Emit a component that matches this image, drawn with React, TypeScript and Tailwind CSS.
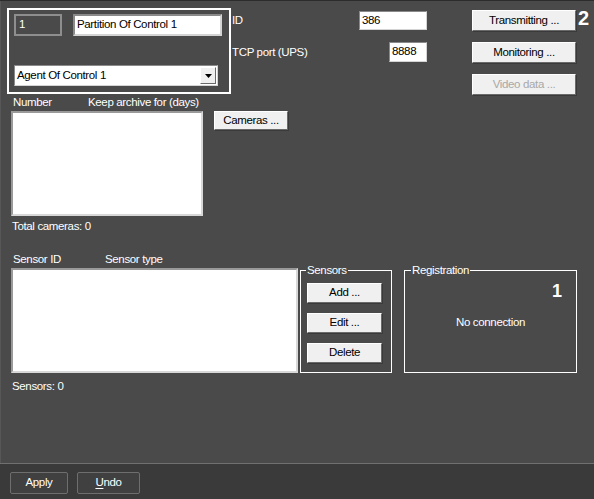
import React from "react";

const FONT = { fontFamily: '"Liberation Sans", Arial, sans-serif' };

function Btn({ w, h, children, disabled }: { w: string; h: string; children: React.ReactNode; disabled?: boolean }) {
  return (
    <div
      className={`${w} ${h} flex items-center justify-center bg-[#f0f0f0] border border-t-white border-l-white border-r-[#6a6a6a] border-b-[#6a6a6a] shadow-[1px_1px_0_#3a3a3a] leading-none ${
        disabled ? "text-[#a8a8a8]" : "text-black"
      }`}
    >
      {children}
    </div>
  );
}

function Input({ w, h, children }: { w: string; h: string; children?: React.ReactNode }) {
  return (
    <div
      className={`${w} ${h} flex items-center bg-white border border-t-[#8a8a8a] border-l-[#8a8a8a] border-r-[#d4d4d4] border-b-[#d4d4d4] pl-[2px] leading-none text-black`}
    >
      {children}
    </div>
  );
}

export default function App() {
  return (
    <div
      style={FONT}
      className="w-[594px] h-[499px] bg-[#4a4a4a] flex flex-col border-t border-[#2c2c2c] text-white text-[11.5px] tracking-[-0.35px] overflow-hidden"
    >
      <div className="flex-1 flex flex-col border-l border-[#575757]">
        {/* Section A */}
        <div className="flex items-start">
          <div className="ml-[6px] mt-[7px] w-[224px] h-[86px] border-2 border-white pl-[5px] pt-[4px] flex flex-col">
            <div className="flex">
              <div className="w-[48px] h-[22px] border-2 border-[#8e8e8e] flex items-center pl-[3px] leading-none text-white">
                1
              </div>
              <div className="ml-[11px] w-[149px] h-[22px] flex items-center bg-white border-2 border-t-[#8a8a8a] border-l-[#8a8a8a] border-r-[#d4d4d4] border-b-[#d4d4d4] pl-[2px] leading-none text-black">
                Partition Of Control 1
              </div>
            </div>
            <div className="mt-[29px] w-[204px] h-[21px] flex items-center bg-white border border-t-[#8a8a8a] border-l-[#8a8a8a] border-r-[#d4d4d4] border-b-[#d4d4d4] leading-none text-black">
              <span className="flex-1 pl-[2px]">Agent Of Control 1</span>
              <div className="w-[16px] h-[17px] mr-[1px] bg-[#f0f0f0] border border-t-white border-l-white border-r-[#6a6a6a] border-b-[#6a6a6a] flex items-center justify-center">
                <svg width="7" height="4" viewBox="0 0 7 4">
                  <path d="M0 0h7L3.5 4z" fill="#000" />
                </svg>
              </div>
            </div>
          </div>

          <div className="ml-[1px] w-[195px] flex flex-col">
            <div className="mt-[10px] h-[19px] flex items-center justify-between leading-none">
              <span className="mt-[1px]">ID</span>
              <Input w="w-[68px]" h="h-[19px]">386</Input>
            </div>
            <div className="mt-[12px] h-[20px] flex items-center justify-between leading-none">
              <span className="mt-[2px]">TCP port (UPS)</span>
              <Input w="w-[38px]" h="h-[20px]">8888</Input>
            </div>
          </div>

          <div className="ml-[45px] mt-[9px] flex flex-col gap-[11px]">
            <Btn w="w-[104px]" h="h-[21px]">Transmitting ...</Btn>
            <Btn w="w-[104px]" h="h-[21px]">Monitoring ...</Btn>
            <Btn w="w-[104px]" h="h-[21px]" disabled>
              Video data ...
            </Btn>
          </div>
          <div className="ml-[2px] mt-[7px] text-[20px] tracking-normal font-bold leading-none">2</div>
        </div>

        {/* Section B */}
        <div className="flex ml-[10px] mt-[1px]">
          <div className="w-[192px] flex flex-col">
            <div className="h-[14px] flex items-center pl-[2px] leading-none whitespace-nowrap">
              <span className="w-[75px]">Number</span>
              <span>Keep archive for (days)</span>
            </div>
            <div className="mt-[1px] w-[192px] h-[105px] bg-white border-2 border-t-[#9a9a9a] border-l-[#9a9a9a] border-r-[#d8d8d8] border-b-[#d8d8d8]" />
          </div>
          <div className="ml-[11px] mt-[15px]">
            <Btn w="w-[74px]" h="h-[19px]">Cameras ...</Btn>
          </div>
        </div>
        <div className="ml-[11px] mt-[4px] h-[14px] flex items-center leading-none">Total cameras: 0</div>

        {/* Section C */}
        <div className="flex ml-[10px] mt-[19px] items-start">
          <div className="w-[287px] flex flex-col">
            <div className="h-[14px] flex items-center pl-[2px] leading-none">
              <span className="w-[92px]">Sensor ID</span>
              <span>Sensor type</span>
            </div>
            <div className="mt-[1px] w-[287px] h-[105px] bg-white border-2 border-t-[#9a9a9a] border-l-[#9a9a9a] border-r-[#d8d8d8] border-b-[#d8d8d8]" />
          </div>

          <fieldset className="ml-[2px] mt-[10px] w-[92px] h-[110px] border border-white p-0 m-0">
            <legend className="ml-[5px] px-[1px] h-[14px] leading-[14px]">Sensors</legend>
            <div className="pl-[6px] pt-[6px] flex flex-col gap-[10px]">
              <Btn w="w-[75px]" h="h-[20px]">Add ...</Btn>
              <Btn w="w-[75px]" h="h-[20px]">Edit ...</Btn>
              <Btn w="w-[75px]" h="h-[20px]">Delete</Btn>
            </div>
          </fieldset>

          <fieldset className="ml-[12px] mt-[10px] w-[173px] h-[110px] border border-white p-0 m-0">
            <legend className="ml-[6px] px-[1px] h-[14px] leading-[14px]">Registration</legend>
            <div className="flex flex-col">
              <div className="self-end mr-[14px] mt-[5px] text-[18px] tracking-normal font-bold leading-none">1</div>
              <div className="self-center mt-[17px] leading-none">No connection</div>
            </div>
          </fieldset>
        </div>
        <div className="ml-[11px] mt-[7px] h-[14px] flex items-center leading-none">Sensors: 0</div>
      </div>

      {/* Bottom bar */}
      <div className="h-[36px] bg-[#3a3a3a] border-t border-[#707070] flex items-start pt-[8px] pl-[10px] gap-[9px]">
        <div className="w-[58px] h-[22px] rounded-[2px] border border-[#6e6e6e] bg-[#404040] flex items-center justify-center leading-none">
          Apply
        </div>
        <div className="w-[63px] h-[22px] rounded-[2px] border border-[#6e6e6e] bg-[#404040] flex items-center justify-center leading-none">
          <span>
            <span className="underline underline-offset-2">U</span>ndo
          </span>
        </div>
      </div>
    </div>
  );
}
